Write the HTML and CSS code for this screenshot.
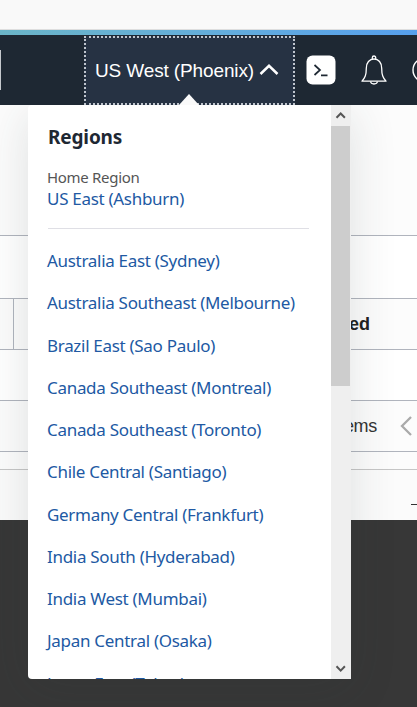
FILE: index.html
```html
<!DOCTYPE html>
<html lang="en">
<head>
<meta charset="utf-8">
<title>Regions</title>
<link rel="stylesheet" href="styles.css">
</head>
<body>
<div class="top-strip"></div>
<div class="accent"></div>
<header class="header">
  <div class="search-edge"></div>
  <button class="region-button">
    <span class="region-label">US West (Phoenix)</span>
    <svg class="caret" width="20" height="12" viewBox="0 0 20 12"><path d="M1.500 10 10 1.800l8.500 8.200" fill="none" stroke="#fff" stroke-width="2.500"/></svg>
  </button>
  <svg class="shell-icon" width="30" height="30" viewBox="0 0 30 30"><rect x=".5" y=".5" width="29" height="29" rx="6" fill="#fff"/><path d="M8.500 10 14 15l-5.500 5M15 20.300h6.500" fill="none" stroke="#1e2833" stroke-width="1.700"/></svg>
  <svg class="bell-icon" width="28" height="30" viewBox="0 0 28 30"><path d="M2 26.200h24c-3-3.500-4.300-6-4.300-13C21.700 7.500 18.500 4 14 4s-7.700 3.500-7.700 9.200c0 7-1.300 9.500-4.300 13Z" fill="none" stroke="#fff" stroke-width="1.300" stroke-linejoin="round"/><path d="M12.300 4V2.700a1.700 1.700 0 0 1 3.400 0V4M10.500 26.500c.5 3.300 6.500 3.300 7 0" fill="none" stroke="#fff" stroke-width="1.300"/></svg>
  <svg class="help-icon" width="26" height="26" viewBox="0 0 26 26"><circle cx="13" cy="13" r="12" fill="none" stroke="#fff" stroke-width="1.400"/></svg>
</header>
<main class="page">
  <div class="row row-intro"></div>
  <div class="row row-gap"></div>
  <div class="row row-head"><div class="cell-first"></div><div class="cell-title">Created</div></div>
  <div class="row row-empty"></div>
  <div class="row row-pager"><span class="pager-text">Showing 0 items</span><svg class="prev" width="14" height="22" viewBox="0 0 14 22"><path d="M12 2 3 11l9 9" fill="none" stroke="#aaa" stroke-width="2.300"/></svg></div>
  <div class="row row-space"></div>
  <div class="row-foot"><i class="dash"></i></div>
  <footer class="dark"></footer>
</main>
<div class="pointer"></div>
<div class="menu">
  <div class="menu-content">
    <h2>Regions</h2>
    <div class="home-label">Home Region</div>
    <a class="home-link">US East (Ashburn)</a>
    <hr>
    <ul>
      <li>Australia East (Sydney)</li>
      <li>Australia Southeast (Melbourne)</li>
      <li>Brazil East (Sao Paulo)</li>
      <li>Canada Southeast (Montreal)</li>
      <li>Canada Southeast (Toronto)</li>
      <li>Chile Central (Santiago)</li>
      <li>Germany Central (Frankfurt)</li>
      <li>India South (Hyderabad)</li>
      <li>India West (Mumbai)</li>
      <li>Japan Central (Osaka)</li>
      <li>Japan East (Tokyo)</li>
    </ul>
  </div>
  <div class="scrollbar">
    <svg class="arrow" width="20" height="21" viewBox="0 0 20 21"><path d="M5.500 12.800 9.700 8.500l4.200 4.300" fill="none" stroke="#555" stroke-width="2"/></svg>
    <div class="thumb"></div>
    <svg class="arrow arrow-down" width="20" height="21" viewBox="0 0 20 21"><path d="M5.500 8.300 9.700 12.600l4.200-4.300" fill="none" stroke="#555" stroke-width="2"/></svg>
  </div>
</div>
</body>
</html>
```
FILE: styles.css
```css
* { box-sizing: border-box; }
body { margin: 0; width: 417px; height: 707px; overflow: hidden; position: relative; background: #fcfcfc; font-family: "Liberation Sans", Arial, sans-serif; }
svg { display: block; flex: none; }
.top-strip { height: 30px; background: #f9f9f9; border-bottom: 1px solid #dedede; }
.accent { height: 5px; background: linear-gradient(90deg, #6bb5c8, #64aedb 50%, #569fed); }
.header { height: 70px; background: #1e2833; display: flex; align-items: center; overflow: hidden; }
.search-edge { width: 1px; height: 40px; background: #c5c9cd; margin-right: 83px; flex: none; }
.region-button { flex: none; align-self: stretch; margin-top: 1px; width: 211px; padding: 0 0 0 9px; border: 2px dotted #bfc5cd; background: #263243; color: #fff; display: flex; align-items: center; font: 19px "Liberation Sans", Arial, sans-serif; }
.region-label { width: 160px; white-space: nowrap; letter-spacing: -.13px; text-align: left; }
.caret { margin-left: 4px; margin-top: -2px; }
.shell-icon { margin-left: 11px; }
.bell-icon { margin-left: 24px; }
.help-icon { margin-left: 24px; }
.row { border-bottom: 1px solid #b0b4bd; display: flex; }
.row-intro { height: 131px; }
.row-gap { height: 63px; background: #fff; }
.row-head { height: 51px; align-items: stretch; }
.cell-first { width: 14px; border-right: 1px solid #b0b4bd; }
.cell-title { width: 356px; text-align: right; font-size: 18px; line-height: 50px; font-weight: bold; color: #222; }
.row-empty { height: 51px; background: #fff; }
.row-pager { height: 51px; align-items: center; }
.pager-text { width: 377px; text-align: right; font-size: 18px; letter-spacing: -.3px; color: #333; }
.prev { margin-left: 22px; }
.row-space { height: 18px; border-color: #c6c6c6; }
.row-foot { height: 50px; display: flex; justify-content: flex-end; padding-top: 34px; background: #fbfbfb; }
.dash { width: 6px; height: 1px; background: #333; }
.dark { height: 187px; background: #373737; }
.pointer { position: absolute; left: 179px; top: 94px; border: solid transparent; border-width: 0 10px 11px; border-bottom-color: #fafafa; }
.menu { position: absolute; left: 28px; top: 105px; width: 323px; height: 574px; display: flex; background: #fff; border-radius: 4px 0 0 4px; box-shadow: 0 8px 48px rgba(40, 60, 60, .14); clip-path: inset(0 -70px -70px -70px); }
.menu-content { flex: 1; height: 574px; overflow: hidden; padding: 19px 22px 0 19px; font-family: "Noto Sans", sans-serif; color: #2159a3; font-size: 17px; letter-spacing: -.3px; }
h2 { margin: 0 0 0 1px; font-size: 19px; line-height: 26px; letter-spacing: -.15px; color: #1e2833; }
.home-label { margin-top: 17px; font-size: 15px; line-height: 20px; color: #555; letter-spacing: -.3px; }
.home-link { display: block; line-height: 23px; }
hr { height: 1px; border: 0; background: #dfdfe5; margin: 18px 0 11px 1px; }
ul { margin: 0; padding: 0; list-style: none; }
li { height: 42.250px; line-height: 42.250px; white-space: nowrap; }
.scrollbar { width: 20px; background: #efefef; display: flex; flex-direction: column; }
.thumb { width: 19px; height: 260px; background: #cdcdcd; }
.arrow-down { margin-top: auto; }
```
